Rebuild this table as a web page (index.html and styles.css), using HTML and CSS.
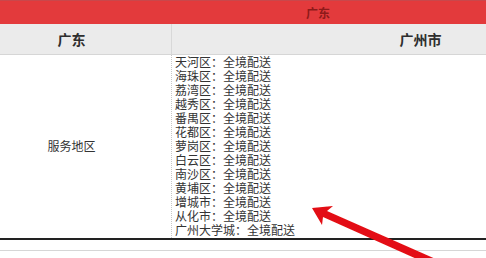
FILE: index.html
```html
<!DOCTYPE html>
<html lang="zh-CN">
<head>
    <meta charset="UTF-8">
    <meta name="viewport" content="width=device-width, initial-scale=1.0">
    <title>服务地区</title>
    <link rel="stylesheet" href="styles.css">
</head>
<body>
    <div class="sheet">
        <!-- 省份标题 -->
        <div class="province-bar">广东</div>

        <div class="row head-row">
            <div class="cell">广东</div>
            <div class="cell">广州市</div>
        </div>

        <div class="row body-row">
            <div class="cell label">服务地区</div>
            <div class="cell areas">
                <p>天河区：全境配送</p>
                <p>海珠区：全境配送</p>
                <p>荔湾区：全境配送</p>
                <p>越秀区：全境配送</p>
                <p>番禺区：全境配送</p>
                <p>花都区：全境配送</p>
                <p>萝岗区：全境配送</p>
                <p>白云区：全境配送</p>
                <p>南沙区：全境配送</p>
                <p>黄埔区：全境配送</p>
                <p>增城市：全境配送</p>
                <p>从化市：全境配送</p>
                <p>广州大学城：全境配送</p>
            </div>
        </div>

        <div class="foot-gap"></div>

        <!-- 红色箭头标注 -->
        <svg class="arrow" width="486" height="258" viewBox="0 0 486 258">
            <defs>
                <filter id="soft" x="-10%" y="-10%" width="120%" height="120%">
                    <feGaussianBlur stdDeviation="0.6"/>
                </filter>
            </defs>
            <polygon points="312,208 333,206 327,211 447,264 428,264 323,217 322,225" fill="#e30f12" filter="url(#soft)"/>
        </svg>
    </div>
</body>
</html>
```

FILE: styles.css
```css
/* 配送范围表 */
html, body {
    margin: 0;
    padding: 0;
    overflow: hidden;
    background: #fff;
}

.sheet {
    position: relative;
    width: 486px;
    height: 258px;
    overflow: hidden;
    font-family: "Noto Sans CJK SC", "Noto Sans", sans-serif;
    color: #333;
}

.province-bar {
    width: 636px;
    height: 24px;
    line-height: 24px;
    background: #e33a3c;
    border-top: 1px solid #c9474b;
    box-sizing: border-box;
    text-align: center;
    font-size: 12px;
    font-weight: bold;
    color: #8e1a1a;
}

/* 表格比窗口宽，左列向左伸出一截 */
.row {
    display: grid;
    grid-template-columns: 199px 498px;
    width: 697px;
    margin-left: -28px;
}

.head-row {
    height: 31px;
    background: #ebebeb;
    border-bottom: 1px solid #d6d6d6;
    box-sizing: border-box;
}

.head-row .cell {
    display: flex;
    align-items: center;
    justify-content: center;
    font-size: 14px;
    font-weight: bold;
    color: #2e2e2e;
}

.head-row .cell + .cell {
    border-left: 1px solid #d8d8d8;
}

.body-row {
    height: 185px;
    border-bottom: 2px solid #222;
    box-sizing: border-box;
}

.label {
    display: flex;
    align-items: center;
    justify-content: center;
    font-size: 12px;
    padding-bottom: 2px;
}

.areas {
    border-left: 1px dotted #c8c8c8;
    padding: 0 0 0 3px;
    font-size: 12px;
    line-height: 14px;
}

.areas p {
    margin: 0;
    white-space: nowrap;
}

.foot-gap {
    height: 10px;
    border-bottom: 1px solid #d6d6d6;
}

.arrow {
    position: absolute;
    left: 0;
    top: 0;
    pointer-events: none;
}
```
